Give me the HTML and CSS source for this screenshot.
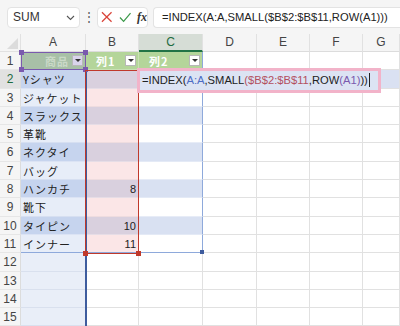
FILE: index.html
```html
<!DOCTYPE html>
<html lang="ja">
<head>
    <meta charset="UTF-8">
    <title>Excel - INDEX SMALL</title>
    <link rel="stylesheet" href="styles.css">
</head>
<body>
    <div class="toolbar">
        <div class="namebox">
            <span>SUM</span>
            <svg class="chev" width="9" height="6" viewBox="0 0 9 6"><path d="M1 1l3.5 3.5L8 1" fill="none" stroke="#555" stroke-width="1.1"/></svg>
        </div>
        <div class="dots">⋮</div>
        <div class="fxbox">
            <svg width="12" height="12" viewBox="0 0 12 12"><path d="M1 1l10 10M11 1L1 11" stroke="#d9453b" stroke-width="1.3"/></svg>
            <svg width="13" height="11" viewBox="0 0 13 11"><path d="M1 5.5l3.8 4L12 1" fill="none" stroke="#3c9a4b" stroke-width="1.3"/></svg>
            <span class="fx">fx</span>
        </div>
        <div class="formula">=INDEX(A:A,SMALL($B$2:$B$11,ROW(A1)))</div>
    </div>

    <div class="sheet">
        <div class="grid">
            <!-- en-têtes de colonnes -->
            <div class="corner"><span class="tri"></span></div>
            <div class="ch">A</div>
            <div class="ch">B</div>
            <div class="ch sel">C</div>
            <div class="ch">D</div>
            <div class="ch">E</div>
            <div class="ch">F</div>
            <div class="ch">G</div>

            <!-- ligne 1 : en-tête du tableau -->
            <div class="rh">1</div>
            <div class="cell a-head">商品<span class="dd lav"></span></div>
            <div class="cell thead">列1<span class="dd"></span></div>
            <div class="cell thead tr">列2<span class="dd"></span></div>
            <div class="cell"></div><div class="cell"></div><div class="cell"></div><div class="cell"></div>

            <div class="rh sel">2</div>
            <div class="cell a dk">Yシャツ</div>
            <div class="cell b dk"></div>
            <div class="cell c dk tr"></div>
            <div class="cell band"></div><div class="cell band"></div><div class="cell band"></div><div class="cell band"></div>

            <div class="rh">3</div>
            <div class="cell a lt">ジャケット</div>
            <div class="cell b lt"></div>
            <div class="cell c lt tr"></div>
            <div class="cell"></div><div class="cell"></div><div class="cell"></div><div class="cell"></div>

            <div class="rh">4</div>
            <div class="cell a dk">スラックス</div>
            <div class="cell b dk"></div>
            <div class="cell c dk tr"></div>
            <div class="cell"></div><div class="cell"></div><div class="cell"></div><div class="cell"></div>

            <div class="rh">5</div>
            <div class="cell a lt">革靴</div>
            <div class="cell b lt"></div>
            <div class="cell c lt tr"></div>
            <div class="cell"></div><div class="cell"></div><div class="cell"></div><div class="cell"></div>

            <div class="rh">6</div>
            <div class="cell a dk">ネクタイ</div>
            <div class="cell b dk"></div>
            <div class="cell c dk tr"></div>
            <div class="cell"></div><div class="cell"></div><div class="cell"></div><div class="cell"></div>

            <div class="rh">7</div>
            <div class="cell a lt">バッグ</div>
            <div class="cell b lt"></div>
            <div class="cell c lt tr"></div>
            <div class="cell"></div><div class="cell"></div><div class="cell"></div><div class="cell"></div>

            <div class="rh">8</div>
            <div class="cell a dk">ハンカチ</div>
            <div class="cell b dk num">8</div>
            <div class="cell c dk tr"></div>
            <div class="cell"></div><div class="cell"></div><div class="cell"></div><div class="cell"></div>

            <div class="rh">9</div>
            <div class="cell a lt">靴下</div>
            <div class="cell b lt"></div>
            <div class="cell c lt tr"></div>
            <div class="cell"></div><div class="cell"></div><div class="cell"></div><div class="cell"></div>

            <div class="rh">10</div>
            <div class="cell a dk">タイピン</div>
            <div class="cell b dk num">10</div>
            <div class="cell c dk tr"></div>
            <div class="cell"></div><div class="cell"></div><div class="cell"></div><div class="cell"></div>

            <div class="rh">11</div>
            <div class="cell a lt tb">インナー</div>
            <div class="cell b lt num tb">11</div>
            <div class="cell c lt tr tb"></div>
            <div class="cell"></div><div class="cell"></div><div class="cell"></div><div class="cell"></div>

            <div class="rh">12</div>
            <div class="cell a ref"></div>
            <div class="cell"></div><div class="cell"></div><div class="cell"></div><div class="cell"></div><div class="cell"></div><div class="cell"></div>

            <div class="rh">13</div>
            <div class="cell a ref"></div>
            <div class="cell"></div><div class="cell"></div><div class="cell"></div><div class="cell"></div><div class="cell"></div><div class="cell"></div>

            <div class="rh">14</div>
            <div class="cell a ref"></div>
            <div class="cell"></div><div class="cell"></div><div class="cell"></div><div class="cell"></div><div class="cell"></div><div class="cell"></div>

            <div class="rh">15</div>
            <div class="cell a ref"></div>
            <div class="cell"></div><div class="cell"></div><div class="cell"></div><div class="cell"></div><div class="cell"></div><div class="cell"></div>
        </div>

        <!-- plages référencées par la formule -->
        <div class="ref-a"></div>
        <div class="ref-a1"><i class="h tl"></i><i class="h trh"></i><i class="h bl"></i><i class="h br"></i></div>
        <div class="ref-b"><i class="h bl"></i><i class="h br"></i></div>
        <div class="tbl-handle"></div>
        <div class="active-line"></div>

        <!-- cellule C2 en mode édition -->
        <div class="editbox">=INDEX(<span class="r-a">A:A</span>,SMALL<span class="r-b">($B$2:$B$11</span>,ROW<span class="r-c">(A1)</span>))<span class="caret"></span></div>
    </div>
</body>
</html>
```

FILE: styles.css
```css
body {
    margin: 0;
    padding: 0;
    width: 400px;
    height: 326px;
    overflow: hidden;
    background: #fff;
    font-family: 'Liberation Sans', Arial, 'Noto Sans CJK JP', sans-serif;
    color: #222;
}
.toolbar {
    height: 34px;
    background: #f5f5f5;
    display: flex;
    align-items: center;
    padding-left: 7px;
    box-sizing: border-box;
}
.namebox {
    width: 73px;
    height: 21px;
    box-sizing: border-box;
    background: #fff;
    border: 1px solid #e3e3e3;
    border-radius: 4px;
    display: flex;
    align-items: center;
    justify-content: space-between;
    padding: 0 4px 0 5px;
    font-size: 12px;
    color: #333;
}
.chev {
    margin-top: 1px;
}
.dots {
    width: 17px;
    text-align: center;
    font-size: 12px;
    color: #555;
}
.fxbox {
    width: 51px;
    height: 21px;
    box-sizing: border-box;
    background: #fff;
    border: 1px solid #e3e3e3;
    border-radius: 4px;
    display: flex;
    align-items: center;
    gap: 6px;
    padding-left: 3px;
}
.fx {
    font-family: 'Liberation Serif', serif;
    font-style: italic;
    font-weight: bold;
    font-size: 12px;
    color: #333;
}
.formula {
    flex: 1;
    height: 21px;
    margin-left: 5px;
    box-sizing: border-box;
    background: #fff;
    border: 1px solid #e3e3e3;
    border-right: none;
    border-radius: 4px 0 0 4px;
    padding-left: 8px;
    line-height: 19px;
    font-size: 11.2px;
    color: #222;
    white-space: nowrap;
    overflow: hidden;
}

.sheet {
    position: relative;
}
.grid {
    display: grid;
    grid-template-columns: 21px 65px 53px 64px 54px 53px 53px 37px;
    grid-template-rows: 18px repeat(15, 18.3px);
}
.corner {
    background: #f5f5f5;
    border-right: 1px solid #e1e1e1;
    border-bottom: 1px solid #e1e1e1;
    position: relative;
}
.tri {
    position: absolute;
    right: 2px;
    bottom: 2px;
    width: 0;
    height: 0;
    border-left: 11px solid transparent;
    border-bottom: 11px solid #dcdcdc;
}
.ch {
    background: #f5f5f5;
    border-right: 1px solid #e1e1e1;
    border-bottom: 1px solid #dcdcdc;
    font-size: 12px;
    color: #444;
    text-align: center;
    line-height: 17px;
}
.ch.sel {
    background: #d6ddd6;
    color: #1d6b3f;
    border-bottom: 2px solid #217346;
}
.rh {
    background: #f5f5f5;
    border-right: 1px solid #dcdcdc;
    border-bottom: 1px solid #e6e6e6;
    font-size: 12px;
    color: #444;
    text-align: center;
    line-height: 18px;
}
.rh.sel {
    background: #e1e1e1;
    color: #1d6b3f;
}
.cell {
    border-right: 1px solid #e1e1e1;
    border-bottom: 1px solid #e1e1e1;
    font-size: 11px;
    line-height: 18px;
    padding-left: 2px;
    white-space: nowrap;
    overflow: hidden;
    position: relative;
    font-family: 'Noto Sans CJK JP', sans-serif;
    letter-spacing: 1px;
}
.cell.band {
    background: #dae1f2;
}
.a-head {
    background: #a8c0a7;
    color: #cad9c8;
    font-weight: bold;
    padding-left: 24px;
}
.thead {
    background: #b4d59a;
    color: #fff;
    font-weight: bold;
    padding-left: 10px;
    border-right-color: #c8e0b4;
    border-bottom-color: #c8e0b4;
}
.dd {
    position: absolute;
    right: 2px;
    top: 3px;
    width: 11px;
    height: 11px;
    box-sizing: border-box;
    background: #fff;
    border: 1px solid #b8b8b8;
}
.dd::after {
    content: "";
    position: absolute;
    left: 2px;
    top: 3px;
    border-left: 3px solid transparent;
    border-right: 3px solid transparent;
    border-top: 3px solid #333;
}
.dd.lav {
    background: #d9d4ec;
}
.a.dk { background: #c6d4ee; border-bottom-color: #dbe3f4; }
.a.lt { background: #e7edf8; border-bottom-color: #d6dff1; }
.a.ref { background: #e9eef8; border-bottom-color: #d9e0ee; }
.b.dk { background: #d9d0de; border-bottom-color: #e6dde6; }
.b.lt { background: #fbe6e7; border-bottom-color: #eedcdf; }
.c.dk { background: #d9e1f2; border-bottom-color: #e4eaf6; }
.c.lt { background: #fff; border-bottom-color: #e7ecf7; }
.num {
    text-align: right;
    padding-right: 2px;
    font-family: 'Liberation Sans', Arial, sans-serif;
    letter-spacing: 0;
}
.tr { border-right: 1px solid #8ea9db; }
.cell.tb { border-bottom: 1px solid #8ea9db; }

/* plages de la formule */
.ref-a {
    position: absolute;
    left: 85px;
    top: 36px;
    width: 2px;
    height: 260px;
    background: #3e5c9e;
}
.ref-a1 {
    position: absolute;
    left: 21px;
    top: 18px;
    width: 65px;
    height: 18px;
    box-sizing: border-box;
    border: 1.5px solid #7a5aae;
}
.ref-b {
    position: absolute;
    left: 85px;
    top: 36px;
    width: 54px;
    height: 184px;
    box-sizing: border-box;
    border: 1.5px solid #c0392b;
}
.h {
    position: absolute;
    width: 5px;
    height: 5px;
    background: inherit;
}
.ref-a1 .h { background: #7a5aae; }
.ref-b .h { background: #c0392b; }
.h.tl { left: -3px; top: -3px; }
.h.trh { right: -3px; top: -3px; }
.h.bl { left: -3px; bottom: -3px; }
.h.br { right: -3px; bottom: -3px; }
.tbl-handle {
    position: absolute;
    left: 200px;
    top: 216px;
    width: 4px;
    height: 4px;
    background: #3e5c9e;
}
.active-line {
    position: absolute;
    left: 139px;
    top: 53px;
    width: 64px;
    height: 2px;
    background: #217346;
}

.editbox {
    position: absolute;
    left: 137px;
    top: 34px;
    width: 244px;
    height: 25px;
    box-sizing: border-box;
    border: 3px solid #f2b3c9;
    background: #dce3f3;
    padding-left: 2px;
    font-size: 11.2px;
    line-height: 19px;
    color: #222;
    white-space: nowrap;
}
.r-a { color: #4d6cc4; }
.r-b { color: #b3505f; }
.r-c { color: #7a5aae; }
.caret {
    display: inline-block;
    width: 1px;
    height: 14px;
    background: #222;
    vertical-align: -3px;
    margin-left: 1px;
}
```
